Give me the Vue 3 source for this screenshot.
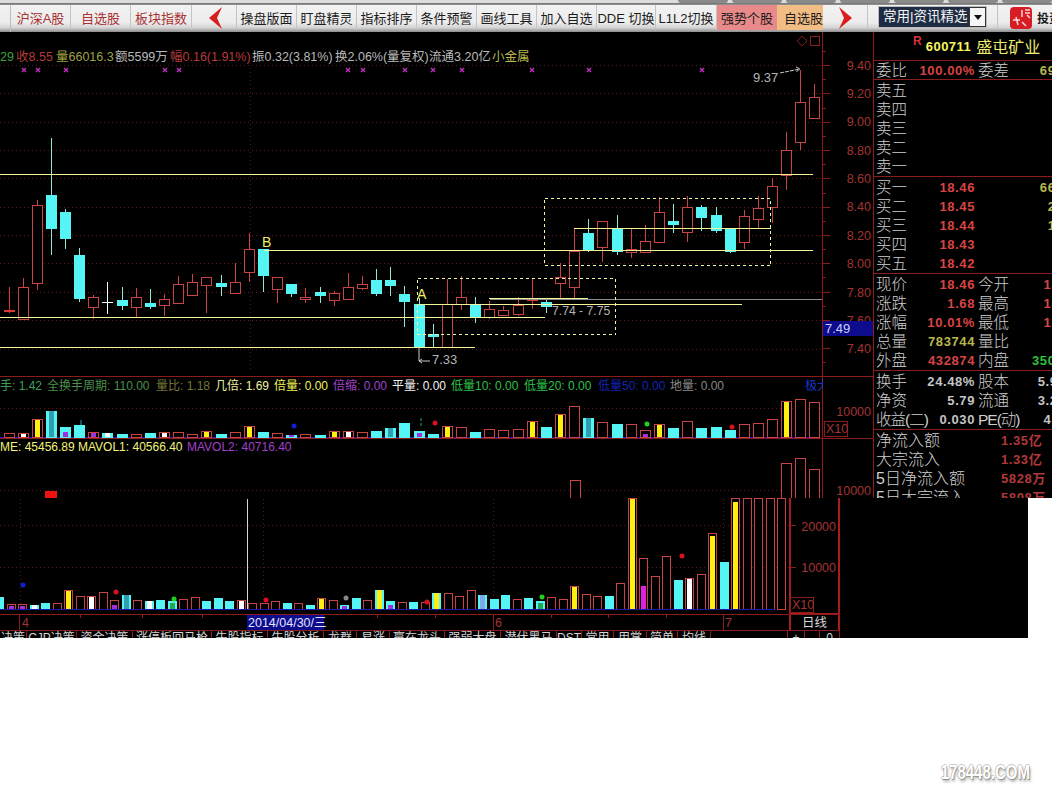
<script setup>
const toolsLeft = [
  { t: '沪深A股', w: 60, red: true },
  { t: '自选股', w: 60, red: true },
  { t: '板块指数', w: 61, red: true },
]
const toolsMid = [
  { t: '操盘版面', w: 60 },
  { t: '盯盘精灵', w: 60 },
  { t: '指标排序', w: 60 },
  { t: '条件预警', w: 60 },
  { t: '画线工具', w: 60 },
  { t: '加入自选', w: 60 },
  { t: 'DDE 切换', w: 59 },
  { t: 'L1L2切换', w: 61 },
  { t: '强势个股', w: 60, cls: 'pink' },
  { t: '自选股', w: 46, cls: 'orange' },
]

// kline: type, body top, body bottom, high, low (page y)
const klineRaw = [
  ['f', 310, 312, 287, 313], ['r', 287, 319, 278, 319], ['r', 205, 283, 200, 290], ['c', 195, 229, 138, 255],
  ['c', 212, 239, 209, 249], ['c', 255, 299, 248, 302], ['r', 297, 307, 295, 319], ['w', 302, 303, 282, 314],
  ['c', 300, 306, 287, 310], ['r', 297, 307, 288, 318], ['c', 303, 307, 289, 309], ['r', 299, 305, 294, 316],
  ['r', 284, 303, 276, 303], ['r', 282, 295, 274, 295], ['r', 277, 285, 277, 313], ['c', 283, 287, 275, 296],
  ['r', 282, 293, 263, 293], ['r', 249, 272, 233, 282], ['c', 249, 276, 249, 292], ['r', 277, 289, 277, 303],
  ['c', 284, 294, 284, 297], ['r', 297, 299, 288, 303], ['c', 292, 296, 287, 303], ['r', 293, 300, 291, 306],
  ['r', 287, 299, 273, 299], ['r', 284, 288, 276, 290], ['c', 280, 294, 269, 296], ['c', 280, 286, 267, 296],
  ['c', 294, 302, 286, 327], ['c', 304, 347, 298, 347], ['c', 334, 337, 324, 347], ['r', 304, 347, 279, 347],
  ['r', 297, 304, 276, 310], ['c', 304, 317, 297, 323], ['r', 309, 317, 301, 319], ['r', 310, 315, 306, 316],
  ['r', 305, 314, 297, 316], ['f', 299, 301, 278, 309], ['c', 302, 307, 300, 313], ['r', 277, 283, 263, 299],
  ['r', 251, 287, 228, 298], ['c', 233, 251, 219, 252], ['r', 221, 247, 221, 262], ['c', 229, 252, 215, 255],
  ['r', 249, 252, 228, 258], ['r', 241, 252, 225, 252], ['r', 212, 242, 197, 242], ['c', 221, 225, 204, 233],
  ['r', 207, 232, 196, 242], ['c', 207, 218, 205, 231], ['c', 215, 231, 207, 233], ['c', 228, 252, 228, 253],
  ['r', 216, 242, 210, 249], ['r', 208, 219, 196, 228], ['r', 186, 207, 178, 223], ['r', 150, 175, 132, 190],
  ['r', 102, 142, 70, 150], ['r', 97, 118, 84, 119],
]
const kx = (i) => Math.round(8.5 + 14.14 * i)
const candleColor = { r: '#c84444', f: '#d83a30', c: '#55f5f5', w: '#ffffff' }
const candles = klineRaw.map(([type, top, bottom, hi, lo], i) => ({
  key: i,
  x: kx(i),
  top,
  bottom,
  hi,
  lo,
  color: candleColor[type],
  wick: type === 'c' ? '#8fe8dc' : candleColor[type],
  hollow: type === 'r',
}))

const hLines = [
  { x1: 0, x2: 813, y: 174 },
  { x1: 264, x2: 813, y: 250 },
  { x1: 0, x2: 545, y: 317 },
  { x1: 419, x2: 742, y: 304 },
  { x1: 489, x2: 588, y: 298 },
  { x1: 0, x2: 475, y: 347 },
  { x1: 574, x2: 771, y: 228 },
]
const crossMarks = [24, 38, 66, 165, 179, 348, 363, 405, 433, 462, 532, 589, 702]
const gridY = [65, 93, 122, 150, 178, 207, 235, 263, 292, 320, 349]
const prices = [
  [9.4, 70], [9.2, 98], [9.0, 126], [8.8, 155], [8.6, 183], [8.4, 211],
  [8.2, 240], [8.0, 268], [7.8, 297], [7.6, 325], [7.4, 353],
].map(([v, y]) => ({ label: v.toFixed(2), y }))
const axisTicks = []
for (let i = 0; i < 23; i++) axisTicks.push({ y: 51 + i * 14.15, major: i % 2 === 1 })

const statusLine = [
  { x: 0, t: '29', c: '#3fa23f' },
  { x: 16, t: '收8.55', c: '#b53a3a' },
  { x: 56, t: '量66016.3', c: '#a0a045' },
  { x: 115, t: '额5599万', c: '#b9b9b9' },
  { x: 170, t: '幅0.16(1.91%)', c: '#b53a3a' },
  { x: 252, t: '振0.32(3.81%)', c: '#b9b9b9' },
  { x: 335, t: '换2.06%(量复权)', c: '#b9b9b9' },
  { x: 429, t: '流通3.20亿', c: '#b9b9b9' },
  { x: 492, t: '小金属', c: '#b8b84e' },
]
const legendOne = [
  { x: 0, t: '手: 1.42', c: '#3f9f5a' },
  { x: 47, t: '全换手周期: 110.00', c: '#4c8f4c' },
  { x: 156, t: '量比: 1.18', c: '#77773a' },
  { x: 215, t: '几倍: 1.69', c: '#f0f0a0' },
  { x: 274, t: '倍量: 0.00', c: '#f2f25a' },
  { x: 333, t: '倍缩: 0.00', c: '#a040c8' },
  { x: 392, t: '平量: 0.00', c: '#f2f2f2' },
  { x: 451, t: '低量10: 0.00', c: '#2fc04a' },
  { x: 524, t: '低量20: 0.00', c: '#2fc04a' },
  { x: 598, t: '低量50: 0.00', c: '#1424b0' },
  { x: 670, t: '地量: 0.00', c: '#888888' },
  { x: 805, t: '极大', c: '#1a34c8' },
]
const legendTwo = [
  { x: 0, t: 'ME: 45456.89', c: '#f2f27a' },
  { x: 78, t: 'MAVOL1: 40566.40', c: '#f2f27a' },
  { x: 187, t: 'MAVOL2: 40716.40', c: '#a040c8' },
]

const Y = '#ffee10'
const W = '#ffffff'
const P = '#a030e0'
// volume bars: type, height, inner colour, inner height
const volumeOneRaw = [
  ['r', 4], ['r', 4, W], ['r', 18, Y], ['c', 27, '#2f9fb0'], ['c', 11, P, 5], ['c', 13], ['r', 5, P], ['c', 5, W],
  ['c', 4], ['r', 3], ['c', 5], ['r', 5, W], ['r', 5], ['r', 3], ['r', 6, Y], ['c', 4], ['r', 5], ['r', 11, Y],
  ['c', 6], ['r', 4], ['c', 3, P], ['r', 3], ['c', 3], ['r', 6, Y], ['r', 6, W], ['r', 5], ['c', 7], ['c', 10, '#2f9fb0'],
  ['c', 15], ['c', 7, P, 4], ['c', 4], ['r', 11, Y], ['r', 10], ['c', 6], ['r', 8], ['r', 7], ['r', 8], ['r', 16, Y],
  ['c', 11], ['r', 23, Y], ['r', 31], ['c', 20, '#2f9fb0'], ['r', 15], ['c', 14], ['r', 13], ['r', 7, P, 3], ['r', 13, Y], ['c', 10],
  ['r', 16], ['c', 10], ['c', 11], ['c', 8], ['r', 13], ['r', 14], ['r', 18], ['r', 36, Y], ['r', 38], ['r', 35],
]
const volumeOne = volumeOneRaw.map(([type, h, inner, innerH], i) => ({
  key: i,
  x: kx(i),
  h,
  inner,
  innerH: innerH || h - 1,
  hollow: type === 'r',
}))
const panelDots = [
  { x: 294, y: 426, c: '#1020d0' },
  { x: 435, y: 423, c: '#d81020' },
  { x: 647, y: 424, c: '#20d020' },
  { x: 732, y: 427, c: '#d81020' },
]

const volumeTwoRaw = [
  ['c', 13], ['r', 5, P, 3], ['r', 5, P, 3], ['c', 5, W], ['c', 7], ['r', 6], ['r', 19, Y], ['r', 13], ['r', 13, W], ['r', 17],
  ['r', 9, P, 4], ['c', 15, '#2f9fb0'], ['r', 9], ['c', 9, W], ['c', 10], ['c', 9, '#22a850', 6], ['r', 10], ['r', 12], ['c', 9], ['c', 12],
  ['c', 9], ['r', 9, W], ['r', 6], ['r', 6], ['r', 8], ['c', 7], ['r', 6], ['c', 5], ['r', 11, Y], ['r', 9],
  ['c', 5, P, 3], ['c', 12], ['r', 9], ['c', 20, Y], ['c', 9, P, 4], ['r', 7], ['c', 8], ['r', 7], ['c', 17, Y], ['r', 16],
  ['r', 13], ['r', 19], ['c', 15, '#7fa8e8'], ['c', 11], ['c', 15], ['r', 10], ['c', 12], ['c', 9, '#22a850', 6], ['r', 12], ['r', 10],
  ['r', 23, Y], ['r', 15], ['r', 13], ['c', 14], ['r', 26], ['r', 111, Y], ['r', 51, '#e020e0', 23], ['r', 33], ['r', 53], ['c', 30],
  ['r', 31, W], ['r', 35], ['r', 76, Y, 73], ['c', 48], ['r', 111, Y, 107], ['r', 111], ['r', 111], ['r', 111], ['r', 111],
]
const volumeTwo = volumeTwoRaw.map(([type, h, inner, innerH], i) => ({
  key: i,
  x: Math.round(-1 + 11.5 * i),
  h,
  inner,
  innerH: innerH || h - 1,
  hollow: type === 'r',
}))
const lowerDots = [
  { x: 23, y: 585, c: '#1020d0' },
  { x: 116, y: 592, c: '#d81020' },
  { x: 174, y: 599, c: '#20d020' },
  { x: 266, y: 600, c: '#d81020' },
  { x: 346, y: 598, c: '#888888' },
  { x: 427, y: 602, c: '#d81020' },
  { x: 542, y: 597, c: '#20d020' },
  { x: 682, y: 556, c: '#d81020' },
]
const lowerTicks = [80, 142, 202, 377, 435, 551, 608, 666]

const tabs = [
  { t: '决策', w: 27, cls: 'first' },
  { t: 'CJP决策', w: 50 },
  { t: '资金决策', w: 56 },
  { t: '涨停板回马枪', w: 79 },
  { t: '牛股指标', w: 56 },
  { t: '牛股分析', w: 56 },
  { t: '龙群', w: 33 },
  { t: '易涨', w: 33 },
  { t: '赢在龙头', w: 55 },
  { t: '强弱大盘', w: 56 },
  { t: '潜伏黑马', w: 56 },
  { t: 'DST', w: 25 },
  { t: '常用', w: 32 },
  { t: '用掌', w: 33 },
  { t: '简单', w: 31 },
  { t: '均线', w: 33 },
  { t: '', w: 77 },
  { t: '+', w: 17 },
  { t: '-', w: 15 },
  { t: '0', w: 20 },
]

const sells = ['卖五', '卖四', '卖三', '卖二', '卖一']
const buys = [
  { l: '买一', v: '18.46', q: '66120', qc: 'olive' },
  { l: '买二', v: '18.45', q: '2310', qc: 'olive' },
  { l: '买三', v: '18.44', q: '1205', qc: 'olive' },
  { l: '买四', v: '18.43', q: '', qc: '' },
  { l: '买五', v: '18.42', q: '', qc: '' },
]
const quote = [
  { l: '现价', v: '18.46', c: 'red', l2: '今开', v2: '18.46', c2: 'red' },
  { l: '涨跌', v: '1.68', c: 'red', l2: '最高', v2: '18.46', c2: 'red' },
  { l: '涨幅', v: '10.01%', c: 'red', l2: '最低', v2: '18.46', c2: 'red' },
  { l: '总量', v: '783744', c: 'olive', l2: '量比', v2: '', c2: '' },
  { l: '外盘', v: '432874', c: 'red', l2: '内盘', v2: '350870', c2: 'green' },
]
const fund = [
  { l: '换手', v: '24.48%', l2: '股本', v2: '5.93亿' },
  { l: '净资', v: '5.79', l2: '流通', v2: '3.20亿' },
  { l: '收益(二)', v: '0.030', l2: 'PE(动)', v2: '41.23', tight: true },
]
const flow = [
  { l: '净流入额', v: '1.35亿' },
  { l: '大宗流入', v: '1.33亿' },
  { l: '5日净流入额', v: '5828万' },
  { l: '5日大宗流入', v: '5808万' },
]
</script>

<template>
  <div class="page">
    <header class="toolbar">
      <div class="strip">
        <span v-for="n in 7" :key="n" class="strip-tab"></span>
      </div>
      <div class="tools">
        <div class="tool-gap"></div>
        <div v-for="item in toolsLeft" :key="item.t" class="tool red-text" :style="{ width: item.w + 'px' }">{{ item.t }}</div>
        <div class="tool arrow-cell">
          <svg width="13" height="22" viewBox="0 0 13 22"><path d="M13 0 L0 11 L13 22 L8 11 Z" fill="#d81e1e" /></svg>
        </div>
        <div v-for="item in toolsMid" :key="item.t" class="tool" :class="item.cls" :style="{ width: item.w + 'px' }">{{ item.t }}</div>
        <div class="tool arrow-cell right">
          <svg width="13" height="22" viewBox="0 0 13 22"><path d="M0 0 L13 11 L0 22 L5 11 Z" fill="#d81e1e" /></svg>
        </div>
        <div class="select-wrap">
          <div class="select">
            <span class="select-text">常用|资讯精选</span>
            <span class="select-btn"><i class="caret"></i></span>
          </div>
        </div>
        <div class="brand">
          <svg width="22" height="22" viewBox="0 0 22 22">
            <rect width="22" height="22" rx="4" fill="#d81c24" />
            <path d="M12 3 V10 M15 3 H20 M15 6 H20 M17 8 L20 11 M3 13 H10 M6 10 L8 18 M12 15 L16 19" stroke="#f8d8d8" stroke-width="1.5" fill="none" />
          </svg>
          <span class="brand-text">投资</span>
        </div>
      </div>
    </header>

    <section class="upper">
      <svg class="chart" width="873" height="466" viewBox="0 32 873 466">
        <g shape-rendering="crispEdges">
          <line v-for="y in gridY" :key="y" x1="0" x2="822" :y1="y + 0.5" :y2="y + 0.5" class="dots" />
          <line x1="250.5" x2="250.5" y1="68" y2="372" class="dots" />
          <line x1="0" x2="822" y1="408.5" y2="408.5" class="dots" />
          <line x1="0" x2="822" y1="490.5" y2="490.5" class="dots" />

          <line x1="822.5" x2="822.5" y1="32" y2="498" class="frame" />
          <line v-for="(tick, i) in axisTicks" :key="i" x1="823" :x2="tick.major ? 830 : 826" :y1="Math.round(tick.y) + 0.5" :y2="Math.round(tick.y) + 0.5" class="frame" />
          <line x1="0" x2="873" y1="376.5" y2="376.5" class="frame" />
          <line x1="0" x2="873" y1="438.5" y2="438.5" class="frame" />
          <line x1="0" x2="812" y1="437.5" y2="437.5" stroke="#2a18c0" />
          <rect x="810.5" y="36.5" width="9" height="9" class="frame" fill="none" />
          <rect x="824.5" y="421.5" width="23" height="15" class="frame" fill="none" />

          <!-- candles -->
          <g v-for="k in candles" :key="k.key">
            <line :x1="k.x + 0.5" :x2="k.x + 0.5" :y1="k.hi" :y2="k.lo" :stroke="k.wick" />
            <rect v-if="k.hollow" :x="k.x - 4.5" :y="k.top + 0.5" width="10" :height="k.bottom - k.top" fill="#000" :stroke="k.color" />
            <rect v-else :x="k.x - 5" :y="k.top" width="11" :height="Math.max(k.bottom - k.top, 1)" :fill="k.color" />
          </g>

          <!-- drawn lines -->
          <line v-for="line in hLines" :key="line.y" :x1="line.x1" :x2="line.x2" :y1="line.y + 0.5" :y2="line.y + 0.5" class="drawn" />
          <line x1="490" x2="822" y1="299.5" y2="299.5" stroke="#8c8c8c" />
          <rect x="417.5" y="278.5" width="198" height="56" class="dashed" />
          <rect x="544.5" y="198.5" width="226" height="67" class="dashed" />

          <!-- volume panel -->
          <g v-for="b in volumeOne" :key="b.key">
            <rect v-if="b.hollow" :x="b.x - 4.5" :y="437.5 - b.h" width="10" :height="b.h" fill="#000" stroke="#c84444" />
            <rect v-else :x="b.x - 5" :y="438 - b.h" width="11" :height="b.h" fill="#55f5f5" />
            <rect v-if="b.inner" :x="b.x - 2" :y="437 - b.innerH" width="5" :height="b.innerH" :fill="b.inner" />
          </g>

          <!-- second volume panel, cut off by the lower chart -->
          <rect x="570.5" y="480.5" width="10" height="20" fill="#000" stroke="#c84444" />
          <rect x="781.5" y="463.5" width="10" height="40" fill="#000" stroke="#c84444" />
          <rect x="795.5" y="458.5" width="10" height="45" fill="#000" stroke="#c84444" />
          <rect x="809.5" y="469.5" width="10" height="34" fill="#000" stroke="#c84444" />
          <rect x="45" y="491" width="12" height="7" fill="#f01010" />
        </g>

        <path d="M802 36 L807 41 L802 46 L797 41 Z" fill="none" stroke="#7a1c1c" />
        <g v-for="x in crossMarks" :key="x" class="cross">
          <path :d="`M${x - 2} 68 l4 4 m0 -4 l-4 4`" />
        </g>
        <circle v-for="d in panelDots" :key="d.x" :cx="d.x" :cy="d.y" r="2.5" :fill="d.c" />
        <line x1="81" x2="81" y1="420" y2="425" stroke="#2f9fb0" />
        <line x1="421" x2="421" y1="418" y2="427" stroke="#2f9f80" stroke-dasharray="3 2" />

        <path d="M419 347 V361 H430 M419 361 l3 -2 m-3 2 l3 2" fill="none" stroke="#c8c8c8" />
        <path d="M780 73 L800 69 M796 67 L800 69 L796 72" fill="none" stroke="#c8c8c8" stroke-dasharray="4 1" />

        <g class="txt">
          <text v-for="s in statusLine" :key="s.x" :x="s.x" y="61" :fill="s.c">{{ s.t }}</text>
          <text v-for="s in legendOne" :key="s.x" :x="s.x" y="390" :fill="s.c" class="legend">{{ s.t }}</text>
          <rect x="823" y="378" width="50" height="18" fill="#000" />
          <text v-for="s in legendTwo" :key="s.x" :x="s.x" y="451" :fill="s.c" class="legend">{{ s.t }}</text>
          <text v-for="p in prices" :key="p.label" x="871" :y="p.y" class="axis-label" text-anchor="end">{{ p.label }}</text>
          <text x="871" y="416" class="axis-label" text-anchor="end">10000</text>
          <text x="871" y="495" class="axis-label" text-anchor="end">10000</text>
          <text x="826" y="433" class="axis-label">X10</text>
          <rect x="823" y="321" width="50" height="15" fill="#0c0c8c" />
          <text x="825" y="333" class="cursor-label">7.49</text>
          <text x="262" y="247" class="mark">B</text>
          <text x="417" y="299" class="mark">A</text>
          <text x="432" y="364" class="note">7.33</text>
          <text x="552" y="315" class="note tight-note">7.74 - 7.75</text>
          <text x="753" y="82" class="note">9.37</text>
        </g>
      </svg>

      <aside class="quote">
        <div class="q-head">
          <sup class="q-r">R</sup>
          <span class="q-code">600711</span>
          <span class="q-name">盛屯矿业</span>
        </div>
        <div class="q-ratio q-row">
          <span class="lab">委比</span><b class="val red">100.00%</b><span class="lab lab2">委差</span><b class="val olive">69120</b>
        </div>
        <div class="q-sec">
          <div v-for="s in sells" :key="s" class="q-row"><span class="lab">{{ s }}</span></div>
        </div>
        <div class="q-sec">
          <div v-for="r in buys" :key="r.l" class="q-row">
            <span class="lab">{{ r.l }}</span><b class="val red">{{ r.v }}</b><span></span><b class="val" :class="r.qc">{{ r.q }}</b>
          </div>
        </div>
        <div class="q-sec">
          <div v-for="r in quote" :key="r.l" class="q-row">
            <span class="lab">{{ r.l }}</span><b class="val" :class="r.c">{{ r.v }}</b><span class="lab lab2">{{ r.l2 }}</span><b class="val" :class="r.c2">{{ r.v2 }}</b>
          </div>
        </div>
        <div class="q-sec">
          <div v-for="r in fund" :key="r.l" class="q-row">
            <span class="lab nowrap" :class="{ squeeze: r.tight }">{{ r.l }}</span><b class="val grey">{{ r.v }}</b><span class="lab lab2 nowrap" :class="{ squeeze: r.tight }">{{ r.l2 }}</span><b class="val grey">{{ r.v2 }}</b>
          </div>
        </div>
        <div class="q-flow">
          <div v-for="r in flow" :key="r.l" class="flow-row">
            <span class="lab flow-lab nowrap">{{ r.l }}</span><b class="val dim-red">{{ r.v }}</b>
          </div>
        </div>
      </aside>
    </section>

    <section class="lower">
      <svg class="lower-chart" width="840" height="133" viewBox="0 498 840 133">
        <g shape-rendering="crispEdges">
          <line x1="0" x2="789" y1="525.5" y2="525.5" class="dots" />
          <line x1="0" x2="789" y1="567.5" y2="567.5" class="dots" />
          <line x1="20.5" x2="20.5" y1="499" y2="609" class="dots" />
          <line x1="263.5" x2="263.5" y1="499" y2="609" class="dots" />
          <line x1="493.5" x2="493.5" y1="499" y2="609" class="dots" />
          <line x1="723.5" x2="723.5" y1="499" y2="609" class="dots" />
          <line x1="247.5" x2="247.5" y1="499" y2="609" stroke="#d8d8d8" />

          <g v-for="b in volumeTwo" :key="b.key">
            <rect v-if="b.hollow" :x="b.x - 3.5" :y="609.5 - b.h" width="8" :height="b.h" fill="#000" stroke="#c84444" />
            <rect v-else :x="b.x - 4" :y="610 - b.h" width="9" :height="b.h" fill="#55f5f5" />
            <rect v-if="b.inner" :x="b.x - 2" :y="609 - b.innerH" width="5" :height="b.innerH" :fill="b.inner" />
          </g>
          <line x1="0" x2="776" y1="609.5" y2="609.5" stroke="#1c18b0" />

          <line x1="789.5" x2="789.5" y1="498" y2="631" class="frame-strong" />
          <line x1="839" x2="839" y1="498" y2="631" class="frame-strong" />
          <line x1="790" x2="840" y1="613.5" y2="613.5" class="frame-strong" />
          <line x1="0" x2="840" y1="614.5" y2="614.5" class="frame" />
          <line x1="0" x2="840" y1="630.5" y2="630.5" class="frame" />
          <line x1="790" x2="796" y1="525.5" y2="525.5" class="frame" />
          <line x1="790" x2="796" y1="567.5" y2="567.5" class="frame" />
          <rect x="790.5" y="597.5" width="23" height="15" class="frame" fill="none" />
          <line x1="19.5" x2="19.5" y1="614" y2="630" class="frame" />
          <line x1="493.5" x2="493.5" y1="614" y2="630" class="frame" />
          <line x1="723.5" x2="723.5" y1="614" y2="630" class="frame" />
          <line v-for="x in lowerTicks" :key="x" :x1="x + 0.5" :x2="x + 0.5" y1="614" y2="618" class="frame" />
          <rect x="247" y="615" width="77" height="15" fill="#0c0c8c" />
        </g>
        <circle v-for="d in lowerDots" :key="d.x" :cx="d.x" :cy="d.y" r="2.5" :fill="d.c" />
        <g class="txt">
          <text x="836" y="531" class="axis-label" text-anchor="end">20000</text>
          <text x="836" y="572" class="axis-label" text-anchor="end">10000</text>
          <text x="792" y="609" class="axis-label">X10</text>
          <text x="22" y="627" class="axis-label">4</text>
          <text x="495" y="627" class="axis-label">6</text>
          <text x="725" y="627" class="axis-label">7</text>
          <text x="248" y="627" class="date-label">2014/04/30/三</text>
          <text x="802" y="627" class="period">日线</text>
        </g>
      </svg>
      <div class="tabs">
        <div v-for="(tab, i) in tabs" :key="i" class="tab" :class="tab.cls" :style="{ width: tab.w + 'px' }">{{ tab.t }}</div>
      </div>
    </section>

    <footer class="foot">
      <span class="mark-logo">178448.COM</span>
    </footer>
  </div>
</template>

<style scoped>
.page {
  width: 1052px;
  height: 796px;
  overflow: hidden;
  background: #fff;
  font-family: "Liberation Sans", "Noto Sans CJK SC", sans-serif;
}

.toolbar {
  height: 32px;
  background: #e6e6e6;
}
.strip {
  height: 5px;
  display: flex;
  justify-content: flex-end;
  gap: 4px;
  background: linear-gradient(#dcdcdc 0, #dcdcdc 3px, #6e6e6e 3px, #9a9a9a 5px);
}
.strip-tab {
  width: 50px;
  height: 3px;
  border-radius: 0 0 6px 6px;
  background: #8a8a8a;
}
.tools {
  height: 27px;
  display: flex;
  align-items: stretch;
  background: linear-gradient(#f2f2f2, #ececec 65%, #d4d4d4 84%, #8c8c8c);
}
.tool-gap {
  width: 10px;
  border-right: 1px solid #bdbdbd;
}
.tool {
  box-sizing: border-box;
  display: flex;
  align-items: center;
  justify-content: center;
  flex: none;
  height: 25px;
  border-right: 1px solid #c4c4c4;
  font-size: 13px;
  color: #1c1c1c;
  white-space: nowrap;
}
.red-text {
  color: #a93232;
}
.pink {
  background: #e98a8a;
  border-right: 0;
}
.orange {
  background: #f2bd84;
  border-right: 0;
  justify-content: flex-start;
  padding-left: 7px;
}
.arrow-cell {
  width: 45px;
  padding-left: 2px;
}
.arrow-cell.right {
  justify-content: flex-end;
  width: 45px;
  padding: 0 15px 0 0;
}
.select-wrap {
  width: 130px;
  flex: none;
  padding: 2px 12px 0 11px;
  box-sizing: border-box;
  border-right: 1px solid #c4c4c4;
  height: 25px;
}
.select {
  display: flex;
  height: 20px;
  width: 107px;
  background: #1e2c44;
  box-shadow: 0 0 0 1px #bdbdbd;
}
.select-text {
  flex: 1;
  color: #f4f4f4;
  font-size: 13.5px;
  line-height: 20px;
  padding-left: 4px;
  white-space: nowrap;
  overflow: hidden;
}
.select-btn {
  width: 17px;
  flex: none;
  background: #f6f6f6;
  display: flex;
  align-items: center;
  justify-content: center;
  border: 1px solid #333;
  box-sizing: border-box;
}
.caret {
  width: 0;
  height: 0;
  border-left: 4px solid transparent;
  border-right: 4px solid transparent;
  border-top: 5px solid #111;
}
.brand {
  flex: 1;
  display: flex;
  align-items: center;
  gap: 5px;
  padding-left: 12px;
  height: 25px;
  overflow: hidden;
}
.brand svg {
  flex: none;
}
.brand-text {
  font-size: 12px;
  font-weight: 700;
  color: #1c1c1c;
  white-space: nowrap;
}

.upper {
  display: flex;
  height: 466px;
  background: #000;
}
.chart {
  flex: none;
  display: block;
}
.txt text {
  font-family: "Liberation Sans", "Noto Sans CJK SC", sans-serif;
  font-size: 12.5px;
}
.txt .legend {
  font-size: 12px;
}
.dots {
  stroke: #5c1414;
  stroke-dasharray: 1 3;
}
.frame {
  stroke: #8c1c1c;
}
.frame-strong {
  stroke: #a81c1c;
  stroke-width: 2;
}
.drawn {
  stroke: #f4f49a;
}
.dashed {
  fill: none;
  stroke: #f4f49a;
  stroke-dasharray: 3 3;
}
.cross path {
  stroke: #c030c0;
  stroke-width: 1.4;
  fill: none;
}
.txt .axis-label {
  fill: #a33434;
  font-size: 12.5px;
}
.txt .cursor-label {
  fill: #c8d0f8;
  font-size: 13px;
}
.txt .mark {
  fill: #eeee66;
  font-size: 14px;
}
.txt .note {
  fill: #b4b4b4;
  font-size: 13px;
}
.txt .tight-note {
  font-size: 12.2px;
}
.txt .date-label {
  fill: #e4e4ff;
  font-size: 12.5px;
}
.txt .period {
  fill: #d8d8d8;
  font-size: 12.5px;
}

.quote {
  flex: none;
  width: 179px;
  height: 466px;
  overflow: hidden;
  border-left: 1px solid #8c1c1c;
  box-sizing: border-box;
  color: #cfcfcf;
}
.q-head {
  box-sizing: border-box;
  height: 29px;
  display: flex;
  align-items: center;
  justify-content: flex-start;
  padding-left: 39px;
  border-bottom: 1px solid #8c1c1c;
  white-space: nowrap;
}
.q-r {
  font-size: 12px;
  font-weight: 700;
  color: #d83434;
  line-height: 1;
  margin: -10px 4px 0 0;
}
.q-code {
  font-size: 13px;
  font-weight: 700;
  color: #f8f860;
  letter-spacing: 0.5px;
}
.q-name {
  font-size: 16px;
  color: #eeee70;
  margin-left: 5px;
}
.q-ratio {
  box-sizing: content-box;
  border-bottom: 1px solid #8c1c1c;
}
.q-sec {
  width: 210px;
  padding-top: 1px;
  border-bottom: 1px solid #8c1c1c;
}
.q-row {
  display: grid;
  grid-template-columns: 36px 62px 36px 66px;
  column-gap: 1px;
  height: 19px;
  align-items: center;
  padding-left: 2px;
  width: 210px;
  box-sizing: border-box;
}
.lab {
  font-size: 15.5px;
  line-height: 19px;
  color: #cfcfcf;
  font-weight: 300;
}
.lab2 {
  padding-left: 2px;
}
.nowrap {
  white-space: nowrap;
}
.squeeze {
  letter-spacing: -1px;
}
.flow-lab {
  font-size: 16px;
}
.val {
  font-size: 13px;
  line-height: 19px;
  font-weight: 700;
  text-align: right;
  letter-spacing: 0.6px;
  white-space: nowrap;
}
.red {
  color: #d84444;
}
.olive {
  color: #b8b84e;
}
.green {
  color: #2fc03a;
}
.grey {
  color: #c4c4c4;
}
.dim-red {
  color: #b03838;
  text-align: left;
}
.q-flow {
  padding-top: 1px;
}
.flow-row {
  display: grid;
  grid-template-columns: 125px 1fr;
  height: 19px;
  align-items: center;
  padding-left: 2px;
}

.lower {
  width: 1028px;
  height: 140px;
  background: #000;
  overflow: hidden;
}
.lower-chart {
  display: block;
}
.tabs {
  display: flex;
  width: 840px;
  height: 7px;
  overflow: hidden;
}
.tab {
  flex: none;
  box-sizing: border-box;
  height: 20px;
  border-right: 1px solid #8c1c1c;
  font-size: 12px;
  line-height: 14px;
  text-align: center;
  color: #d4d4d4;
  white-space: nowrap;
  overflow: hidden;
}
.tab.first {
  text-align: right;
  padding-right: 1px;
}

.foot {
  height: 158px;
  display: flex;
  justify-content: flex-end;
  align-items: flex-start;
  padding: 123px 22px 0 0;
  box-sizing: border-box;
}
.mark-logo {
  display: inline-block;
  font-weight: 700;
  font-size: 20px;
  line-height: 22px;
  color: #fff;
  transform: scale(0.75, 1);
  transform-origin: right center;
  text-shadow: 1px 1px 1px #8c8c8c, -1px 0 0 #bbb, 0 -1px 0 #ccc, 2px 3px 3px #bdbdbd;
}
</style>

<style>
body {
  background: #fff;
}
</style>
